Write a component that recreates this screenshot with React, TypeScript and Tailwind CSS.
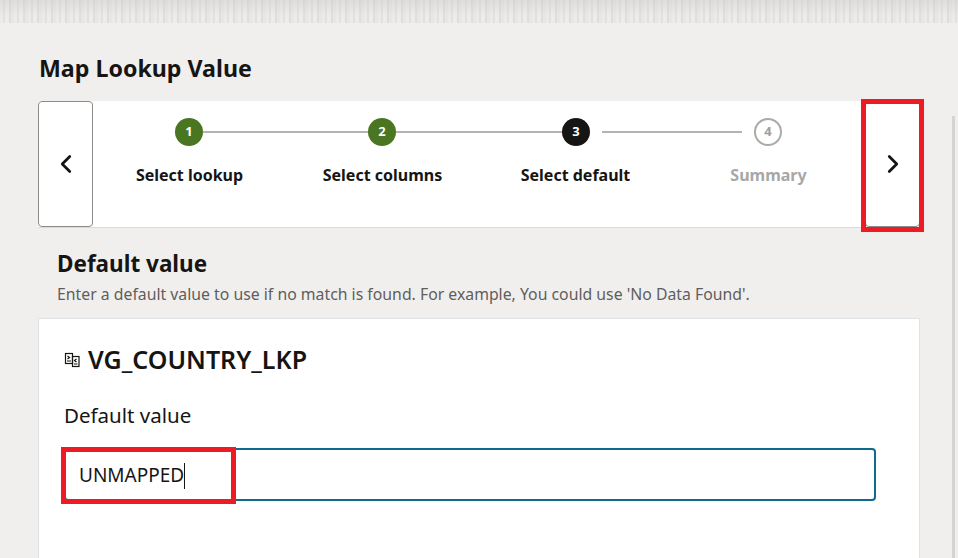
import { ChevronLeft, ChevronRight } from "lucide-react";

const steps = [
  { n: 1, label: "Select lookup", state: "done" },
  { n: 2, label: "Select columns", state: "done" },
  { n: 3, label: "Select default", state: "current" },
  { n: 4, label: "Summary", state: "todo" },
];

function StepCircle({ n, state }: { n: number; state: string }) {
  if (state === "done") {
    return (
      <div className="flex h-7 w-7 shrink-0 items-center justify-center rounded-full bg-[#4a7622] text-[13px] font-bold text-white">
        {n}
      </div>
    );
  }
  if (state === "current") {
    return (
      <div className="flex h-7 w-7 shrink-0 items-center justify-center rounded-full bg-[#161513] text-[13px] font-bold text-white">
        {n}
      </div>
    );
  }
  return (
    <div className="flex h-7 w-7 shrink-0 items-center justify-center rounded-full border-2 border-[#ababa9] text-[13px] font-bold text-[#9f9e9c]">
      {n}
    </div>
  );
}

function LookupIcon() {
  return (
    <svg width="16" height="16" viewBox="0 0 16 16" fill="none" stroke="#161513" strokeWidth="1.2" className="shrink-0">
      <rect x="1.5" y="1.5" width="7" height="10" />
      <rect x="8.5" y="4.5" width="6.5" height="10" />
      <path d="M3.5 4 L5.5 5.5 L3.5 7 M3 9 H7" />
      <path d="M12.5 7 L10.5 8.5 L12.5 10 M10 12 H13.5" />
    </svg>
  );
}

export default function App() {
  return (
    <div
      className="relative h-[558px] w-[958px] overflow-hidden bg-[#f1efed] text-[#161513]"
      style={{ fontFamily: '"Noto Sans", "Open Sans", sans-serif' }}
    >
      <div className="h-[23px] bg-[linear-gradient(180deg,rgba(205,203,200,0.45)_0px,rgba(205,203,200,0.15)_10px,rgba(205,203,200,0)_16px),repeating-linear-gradient(90deg,#ecebe9_0px,#ecebe9_3px,#e3e1df_3px,#e3e1df_5px,#eeecea_5px,#eeecea_9px,#e0dedc_9px,#e0dedc_11px,#e9e7e5_11px,#e9e7e5_14px)]" />

      <div className="pl-[38px]">
        <h1 className="mt-[28px] h-[34px] pl-px text-[23.2px] leading-[34px] font-bold">Map Lookup Value</h1>

        <div className="mt-[16px] flex h-[127px] w-[882px] border-b border-[#dcdad8] bg-white">
          <button className="flex h-[126px] w-[55px] shrink-0 items-center justify-center rounded-[4px] border border-[#8d8c8a] bg-white">
            <ChevronLeft size={30} strokeWidth={2.2} />
          </button>

          <div className="flex flex-1 flex-col pt-[17px]">
            <div className="flex items-center pl-[82px]">
              <StepCircle n={1} state="done" />
              <div className="h-[2px] w-[165px] bg-[#b5b4b2]" />
              <StepCircle n={2} state="done" />
              <div className="h-[2px] w-[166px] bg-[#b5b4b2]" />
              <StepCircle n={3} state="current" />
              <div className="mx-[12px] h-[2px] w-[140px] bg-[#b5b4b2]" />
              <StepCircle n={4} state="todo" />
            </div>
            <div className="mt-[17px] flex">
              {steps.map((s) => (
                <div
                  key={s.n}
                  className={
                    s.state === "todo"
                      ? "w-[193px] text-center text-[16px] leading-[24px] font-bold text-[#a8a7a5]"
                      : "w-[193px] text-center text-[16px] leading-[24px] font-bold"
                  }
                >
                  {s.label}
                </div>
              ))}
            </div>
          </div>

          <button className="flex h-[126px] w-[55px] shrink-0 items-center justify-center rounded-[4px] border border-[#8d8c8a] bg-white">
            <ChevronRight size={30} strokeWidth={2.2} />
          </button>
        </div>

        <div className="px-[19px] pt-[19px]">
          <h2 className="text-[22.5px] leading-[33px] font-bold">Default value</h2>
          <p className="mt-[4px] text-[15.8px] leading-[20px] text-[#5f5e5c]">
            Enter a default value to use if no match is found. For example, You could use 'No Data Found'.
          </p>
        </div>

        <div className="mt-[14px] h-[300px] w-[882px] border border-[#dfe3e6] bg-white pt-[24px] pl-[25px]">
          <div className="flex items-center gap-[8px]">
            <LookupIcon />
            <span className="text-[25px] leading-[33px] font-semibold">VG_COUNTRY_LKP</span>
          </div>
          <div className="mt-[26px] text-[20.5px] leading-[27px]">Default value</div>
          <div className="mt-[19px] flex h-[53px] w-[812px] items-center rounded-[4px] border-2 border-[#0f6a8f] bg-white pt-[2px] pl-[13px] text-[19px]">
            <span>UNMAPPED</span>
            <span className="h-[26px] w-px bg-[#161513]" />
          </div>
        </div>
      </div>

      {/* scrollbar */}
      <div className="absolute top-[116px] right-[3px] bottom-0 w-[3px] bg-[#d6d4d2]" />

      {/* red annotation boxes */}
      <div className="absolute top-[99px] left-[861px] h-[133px] w-[63px] border-[5px] border-[#ed1c24]" />
      <div className="absolute top-[447px] left-[61px] h-[57px] w-[175px] border-[5px] border-[#ed1c24]" />
    </div>
  );
}
